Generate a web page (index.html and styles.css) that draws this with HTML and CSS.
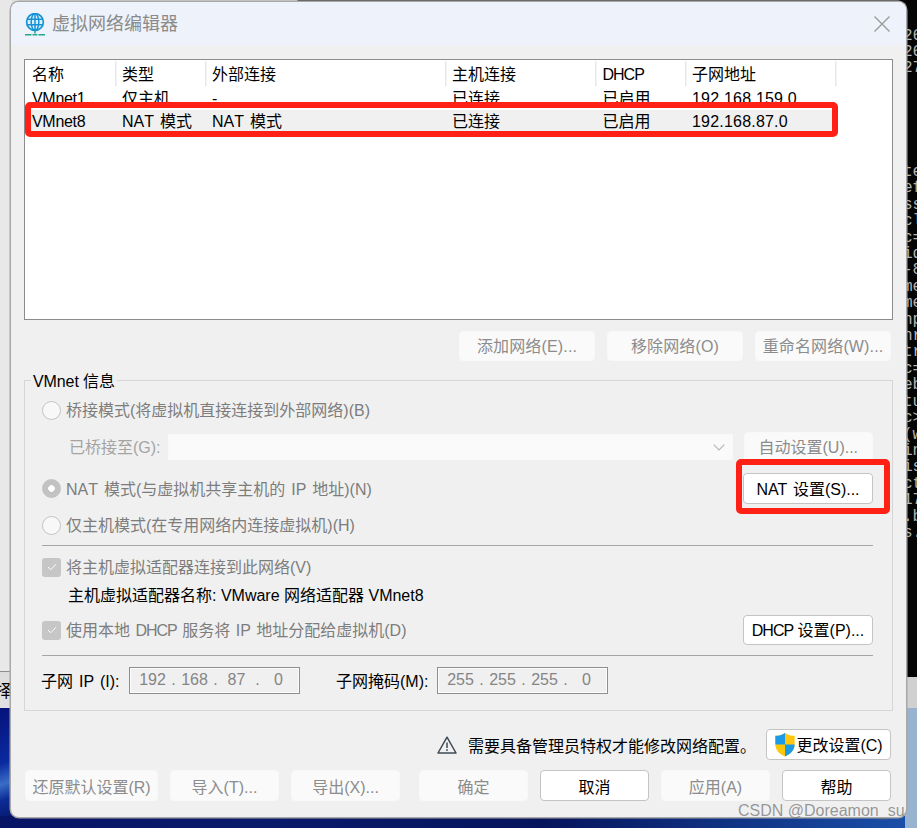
FILE: index.html
```html
<!DOCTYPE html>
<html lang="zh">
<head>
<meta charset="utf-8">
<title>虚拟网络编辑器</title>
<link rel="stylesheet" href="styles.css">
</head>
<body>
<div class="desktop">
  <div class="bg-top"></div>
  <div class="bg-left"><span class="bg-left-text">择</span></div>
  <div class="bg-wall-left"></div>
  <div class="bg-terminal">
    <pre class="term term-a">26
26
27</pre>
    <pre class="term term-b">te
ef
ss
cl
c=
id
-8
me
me
np
nr
tr
c=
eb
tu
c&gt;
(w
in
is
ct
17
.b
s.</pre>
  </div>
  <div class="bg-right-strip"></div>
  <div class="bg-wall-right"></div>
  <div class="bg-bottom"></div>

  <main class="dialog">
    <header class="titlebar">
      <svg class="globe" viewBox="0 0 20 23" width="20" height="23" aria-hidden="true">
        <circle cx="10" cy="9" r="8.4" fill="#d8f0fb" stroke="#1692d6" stroke-width="1.7"/>
        <ellipse cx="10" cy="9" rx="3.8" ry="8.4" fill="none" stroke="#1692d6" stroke-width="1.5"/>
        <path d="M2 6.2h16M2 11.8h16M10 .6v16.8" fill="none" stroke="#1692d6" stroke-width="1.5"/>
        <path d="M10 17.5v3" stroke="#2aa79b" stroke-width="1.6"/>
        <path d="M0 21.8h6.5M7.5 21.8h5M13.5 21.8h6.5" stroke="#23a88f" stroke-width="1.4"/>
      </svg>
      <h1 class="title">虚拟网络编辑器</h1>
      <svg class="close" viewBox="0 0 16 16" width="16" height="16" aria-hidden="true">
        <path d="M.5.5l15 15M15.5.5l-15 15" fill="none" stroke="#9a9a9a" stroke-width="1.4"/>
      </svg>
    </header>

    <div class="content">
      <section class="list">
        <div class="list-row list-head">
          <span class="c1">名称</span><span class="c2">类型</span><span class="c3">外部连接</span><span class="c4">主机连接</span><span class="c5 cap">DHCP</span><span class="c6">子网地址</span>
        </div>
        <div class="list-row">
          <span class="c1 tight">VMnet1</span><span class="c2">仅主机</span><span class="c3">-</span><span class="c4">已连接</span><span class="c5">已启用</span><span class="c6 digits">192.168.159.0</span>
        </div>
        <div class="list-row list-selected">
          <span class="c1 tight">VMnet8</span><span class="c2 ws">NAT 模式</span><span class="c3 ws">NAT 模式</span><span class="c4">已连接</span><span class="c5">已启用</span><span class="c6 digits">192.168.87.0</span>
        </div>
      </section>

      <div class="net-actions">
        <button class="btn off w135">添加网络(E)...</button>
        <button class="btn off w135">移除网络(O)</button>
        <button class="btn off w135">重命名网络(W)...</button>
      </div>

      <section class="group">
        <span class="legend">VMnet 信息</span>
        <div class="row r-bridge">
          <span class="radio"></span><span class="lbl">桥接模式(将虚拟机直接连接到外部网络)(B)</span>
        </div>
        <div class="row r-bridged">
          <span class="lbl lighter bridged-label">已桥接至(G):</span>
          <div class="combo">
            <svg viewBox="0 0 12 7" width="12" height="7" aria-hidden="true"><path d="M.7.7L6 6l5.3-5.3" fill="none" stroke="#b4b4b4" stroke-width="1.1"/></svg>
          </div>
          <button class="btn off side">自动设置(U)...</button>
        </div>
        <div class="row r-nat">
          <span class="radio on"></span><span class="lbl ws">NAT 模式(与虚拟机共享主机的 IP 地址)(N)</span>
          <button class="btn side right tall ws">NAT 设置(S)...</button>
        </div>
        <div class="row r-host">
          <span class="radio"></span><span class="lbl">仅主机模式(在专用网络内连接虚拟机)(H)</span>
        </div>
        <hr class="rule rule-a">
        <div class="row r-check1">
          <span class="check"><svg viewBox="0 0 12 10" width="10" height="8" aria-hidden="true"><path d="M1 5l3.4 3.4L11 1.5" fill="none" stroke="#fff" stroke-width="1.2"/></svg></span><span class="lbl">将主机虚拟适配器连接到此网络(V)</span>
        </div>
        <div class="row r-adapter"><span class="adapter-text">主机虚拟适配器名称: VMware 网络适配器 VMnet8</span></div>
        <div class="row r-check2">
          <span class="check"><svg viewBox="0 0 12 10" width="10" height="8" aria-hidden="true"><path d="M1 5l3.4 3.4L11 1.5" fill="none" stroke="#fff" stroke-width="1.2"/></svg></span><span class="lbl ws-small">使用本地 <span class="cap">DHCP</span> 服务将 IP 地址分配给虚拟机(D)</span>
          <button class="btn side right"><span class="cap">DHCP</span> 设置(P)...</button>
        </div>
        <hr class="rule rule-b">
        <div class="row r-ip">
          <span class="ip-label ws">子网 IP (I):</span>
          <div class="ip"><span class="n">192</span><span class="d">.</span><span class="n">168</span><span class="d">.</span><span class="n">87</span><span class="d">.</span><span class="n">0</span></div>
          <span class="ip-label mask-label">子网掩码(M):</span>
          <div class="ip"><span class="n">255</span><span class="d">.</span><span class="n">255</span><span class="d">.</span><span class="n">255</span><span class="d">.</span><span class="n">0</span></div>
        </div>
      </section>

      <div class="warn-row">
        <svg class="warn-icon" viewBox="0 0 20 18" width="20" height="18" aria-hidden="true">
          <path d="M10 1.2L19 17H1z" fill="none" stroke="#3f4a55" stroke-width="1.5" stroke-linejoin="round"/>
          <path d="M10 6.5v5.5" stroke="#3f4a55" stroke-width="1.5"/>
          <path d="M10 13.2v1.7" stroke="#3f4a55" stroke-width="1.5"/>
        </svg>
        <span class="warn-text">需要具备管理员特权才能修改网络配置。</span>
        <button class="btn change">
          <svg class="shield" viewBox="0 0 22 26" width="22" height="25" aria-hidden="true">
            <path d="M11 1C8 3 4.500 4 1 4v9c0 6 4.500 10 10 12.500C16.500 23 21 19 21 13V4c-3.500 0-7-1-10-3z" fill="#ffc60b"/>
            <path d="M11 1C8 3 4.500 4 1 4v9h10zM11 13v12.500c5.500-2.500 10-6.500 10-12.500z" fill="#1b9be6"/>
          </svg>更改设置(C)</button>
      </div>

      <footer class="footer">
        <button class="btn off f133">还原默认设置(R)</button>
        <button class="btn off f109">导入(T)...</button>
        <button class="btn off f109">导出(X)...</button>
        <button class="btn off f109 push">确定</button>
        <button class="btn f109">取消</button>
        <button class="btn off f109">应用(A)</button>
        <button class="btn f109">帮助</button>
      </footer>
    </div>
  </main>

  <div class="mark mark-list"></div>
  <div class="mark mark-nat"></div>
  <div class="watermark">CSDN @Doreamon_su</div>
</div>
</body>
</html>
```

FILE: styles.css
```css
* { box-sizing: border-box; }
html, body { margin: 0; padding: 0; }
body {
  width: 917px;
  height: 828px;
  overflow: hidden;
  font-family: "Liberation Sans", "Noto Sans CJK SC", sans-serif;
  font-size: 16px;
  color: #000;
}
.desktop { position: relative; width: 917px; height: 828px; overflow: hidden; background: #0a1a62; }

/* what shows round the dialog */
.bg-top { position: absolute; left: 0; top: 0; width: 917px; height: 4px; background: linear-gradient(90deg, #dcdcdc 0, #dcdcdc 297px, #2c2c2c 298px, #2c2c2c 100%); }
.bg-left { position: absolute; left: 0; top: 0; width: 12px; height: 708px; background: linear-gradient(180deg, #e8e8e8 0, #e8e8e8 671px, #8e8e8e 671px, #8e8e8e 672px, #dcdcdc 672px, #e2e2e2 708px); overflow: hidden; }
.bg-left-text { position: absolute; left: -5px; top: 681px; font-size: 17px; line-height: 22px; }
.bg-wall-left { position: absolute; left: 0; top: 708px; width: 12px; height: 120px; background: linear-gradient(160deg, #06127a 0, #0a2aa0 45%, #3a6cc6 62%, #0c2c96 75%, #06105c 100%); }
.bg-terminal { position: absolute; left: 900px; top: 0; width: 17px; height: 677px; background: #050505; overflow: hidden; }
.term { position: absolute; left: 3px; margin: 0; font-family: "Liberation Mono", monospace; font-size: 16px; color: #b4b4b4; }
.term-a { top: 28px; line-height: 16px; }
.term-b { top: 164px; line-height: 16.4px; }
.bg-right-strip { position: absolute; left: 900px; top: 677px; width: 17px; height: 31px; background: #d0d0d0; }
.bg-wall-right { position: absolute; left: 900px; top: 708px; width: 17px; height: 120px; background: #97b3cf; }
.bg-bottom { position: absolute; left: 0; top: 816px; width: 905px; height: 12px; background: linear-gradient(90deg, #081466 0, #0a1a6a 30%, #06145c 60%, #1a4fa8 100%); }

/* dialog */
.dialog {
  position: absolute;
  left: 11px;
  top: 2px;
  width: 895px;
  height: 815px;
  display: flex;
  flex-direction: column;
  background: #f0f0f0;
  border-radius: 8px;
  overflow: hidden;
  box-shadow: 0 0 0 1.500px #a8a8a8;
}
.titlebar { flex: none; height: 43px; display: flex; align-items: center; padding: 0 16px 0 14px; background: #eef2fb; }
.globe { flex: none; margin-top: 1px; }
.title { flex: 1; margin: 0 0 0 7px; font-size: 18px; font-weight: 400; color: #8a8a8a; line-height: 24px; }
.close { flex: none; margin-top: 0; }

.content { display: flex; flex-direction: column; padding: 14px 13px 0 13px; }

/* text width helpers */
.ws { word-spacing: 1.500px; font-kerning: none; }
.ws-small { word-spacing: 1px; font-kerning: none; }
.cap { letter-spacing: -1px; }
.tight { letter-spacing: -.3px; }
.digits { letter-spacing: .2px; }

/* network list */
.list { flex: none; height: 261px; background: #fff; border: 1px solid #8c8c8c; overflow: hidden; padding-top: 1px; }
.list-row { display: flex; height: 23px; line-height: 23px; white-space: nowrap; }
.list-row span { display: block; padding-left: 7px; overflow: hidden; flex: none; }
.list-head { height: 26px; }
.list-head span { height: 25px; line-height: 27px; box-shadow: 1.500px 0 0 #e8e8e8; }
.list-selected { width: 810px; background: #f0f0f0; }
.c1 { width: 90px; }
.c2 { width: 90px; }
.c3 { width: 240px; }
.c4 { width: 150px; }
.list-row .c5 { width: 90px; padding-left: 7.500px; }
.c6 { width: 150px; }

/* buttons */
.btn {
  display: block;
  height: 30px;
  padding: 0 0 2px;
  background: #fff;
  border: 1px solid #c4c4c4;
  border-radius: 4px;
  font: inherit;
  color: #000;
  white-space: nowrap;
  text-align: center;
}
.btn.off { background: #fafafa; border-color: #f8f8f8; color: #8c8c8c; }
.w135 { width: 136px; letter-spacing: .15px; }

.net-actions { flex: none; display: flex; justify-content: flex-end; gap: 12px; margin-top: 11px; padding-right: 2px; }

/* VMnet group */
.group { position: relative; flex: none; height: 331px; margin-top: 19px; padding: 15px 19px 0 17px; border: 1px solid #d6d6d6; display: flex; flex-direction: column; }
.legend { position: absolute; left: 6px; top: -8px; padding: 0 2px; background: #f0f0f0; line-height: 18px; letter-spacing: -.1px; }
.row { flex: none; display: flex; align-items: center; white-space: nowrap; }
.lbl { color: #7d7d7d; margin-left: 5px; padding-bottom: 2px; }
.lighter { color: #a4a4a4; margin-left: 0; }
.radio { flex: none; width: 19px; height: 19px; border-radius: 50%; background: #f8f8f8; border: 1.500px solid #c4c4c4; }
.radio.on { background: radial-gradient(circle, #fff 0, #fff 3px, #c2c2c2 3.600px); border-color: #c2c2c2; }
.check { flex: none; width: 19px; height: 19px; border-radius: 3px; background: #c6c6c6; display: flex; align-items: center; justify-content: center; }

.r-bridge { height: 28px; }
.r-bridged { height: 30px; margin-top: 8px; padding-left: 27px; }
.bridged-label { width: 99px; }
.combo { flex: none; width: 565px; height: 26px; background: #fafafa; border: 1px solid #f8f8f8; display: flex; align-items: center; justify-content: flex-end; padding-right: 7px; }
.side { width: 130px; height: 30px; margin-left: 11px; }
.right { margin-left: auto; }
.tall { height: 31px; }
.r-nat { height: 31px; margin-top: 11px; }
.r-host { height: 28px; margin-top: 7px; }
.rule { flex: none; width: 100%; height: 1px; margin: 0; border: 0; background: #a6a6a6; }
.rule-a { margin-top: 6px; }
.r-check1 { height: 28px; margin-top: 7px; }
.r-adapter { height: 28px; padding-left: 26px; }
.adapter-text { padding-bottom: 2px; }
.r-check2 { height: 30px; margin-top: 6px; }
.rule-b { margin-top: 10px; }
.r-ip { height: 28px; margin-top: 10px; }
.ip-label { width: 88px; margin-left: -1px; }
.mask-label { width: 101px; margin-left: 36px; }
.ip { flex: none; width: 171px; height: 27px; padding-left: 6px; display: flex; align-items: center; background: #f0f0f0; border: 1px solid #8f8f8f; color: #858585; box-shadow: inset 0 0 0 1px #fcfcfc; }
.n { width: 33px; text-align: center; flex: none; }
.d { width: 9px; text-align: center; flex: none; }

/* warning row */
.warn-row { flex: none; height: 31px; margin-top: 18px; padding-right: 2px; display: flex; align-items: center; justify-content: flex-end; }
.warn-icon { flex: none; margin-right: 11px; }
.warn-text { flex: none; margin-right: 10px; padding-top: 1px; }
.btn.change { width: 125px; height: 31px; display: flex; align-items: center; justify-content: center; }
.shield { flex: none; margin-top: 2px; }

/* footer buttons */
.footer { flex: none; display: flex; gap: 12px; margin-top: 10px; padding-left: 1px; padding-right: 2px; }
.footer .btn { height: 31px; padding-bottom: 0; }
.f133 { width: 133px; }
.f109 { width: 109px; }
.push { margin-left: 7px; }

/* annotations drawn over the screenshot */
.mark { position: absolute; border: 6px solid #ff2016; border-radius: 5px; }
.mark-list { left: 25px; top: 102px; width: 813px; height: 35px; }
.mark-nat { left: 736px; top: 459px; width: 154px; height: 55px; }
.watermark { position: absolute; left: 738px; top: 801px; font-size: 16px; line-height: 20px; color: rgba(120, 120, 120, .75); white-space: nowrap; }
```
